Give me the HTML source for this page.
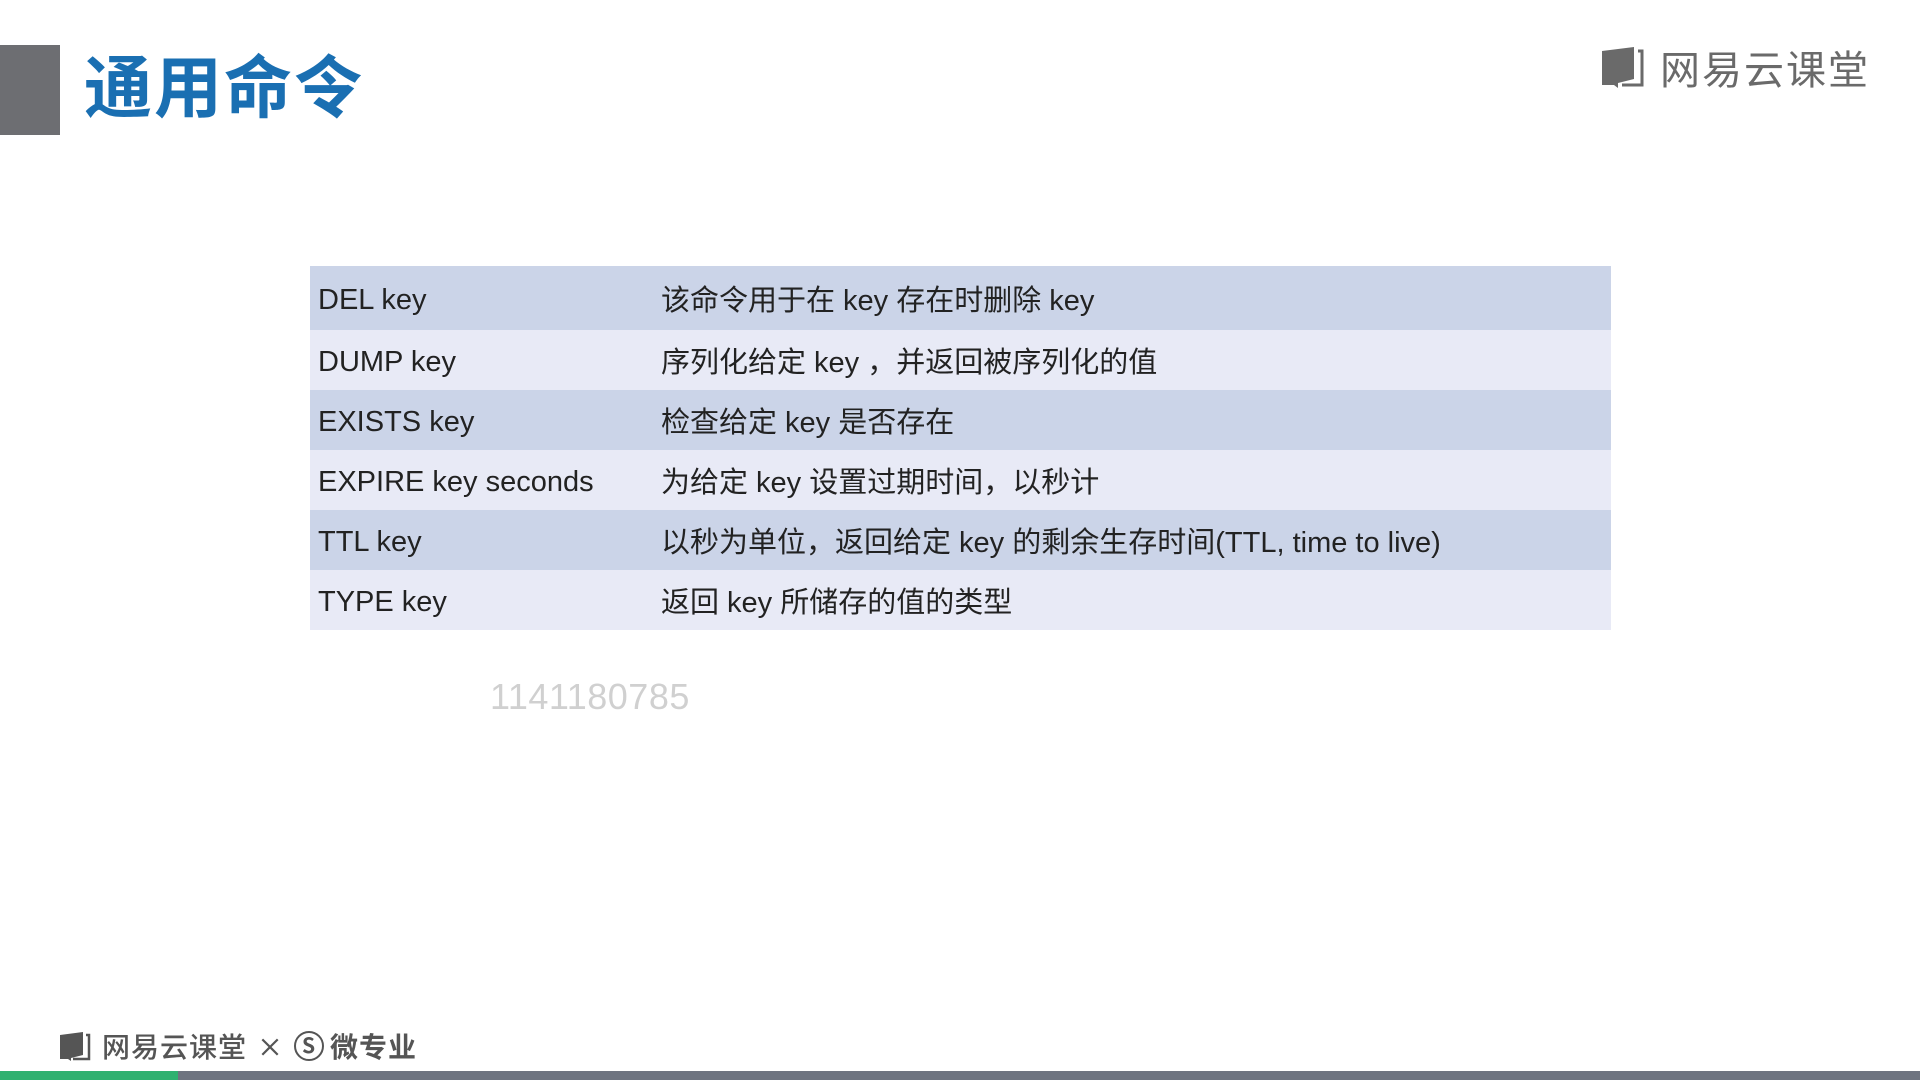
<!DOCTYPE html>
<html><head><meta charset="utf-8"><style>
*{margin:0;padding:0;box-sizing:border-box}
body{width:1920px;height:1080px;background:#fff;position:relative;overflow:hidden;font-family:"Liberation Sans","Noto Sans CJK SC",sans-serif}
.blk{position:absolute;left:0;top:45px;width:60px;height:90px;background:#6d6e72}
.title{position:absolute;left:84px;top:40px;font-size:68px;font-weight:bold;color:#1a6fb2;letter-spacing:2px;font-family:"Noto Sans CJK SC",sans-serif;line-height:85px}
.logo{position:absolute;left:1600px;top:42px;height:50px;display:flex;align-items:center;color:#6a6a6a;font-size:40px;font-family:"Noto Sans CJK SC",sans-serif;letter-spacing:2px}
table{position:absolute;left:310px;top:266px;width:1301px;border-collapse:collapse;font-size:29px;color:#222;font-family:"Liberation Sans","Noto Sans CJK SC",sans-serif}
td{height:60px;padding:0;vertical-align:middle}
td.a{padding-left:8px;width:351px;padding-top:4px}
tr.d{background:#cbd4e8}tr.l{background:#e8eaf6}
tr:first-child td{height:64px}
.wm{position:absolute;left:490px;top:676px;font-size:36px;color:#d0d0d0;letter-spacing:0.5px}
.foot{position:absolute;left:58px;top:1026px;display:flex;align-items:center;color:#555;font-size:28px;font-family:"Noto Sans CJK SC",sans-serif;letter-spacing:1px;font-weight:500}
.bar{position:absolute;left:0;top:1071px;width:1920px;height:9px;background:#6e7480}
.bar i{position:absolute;left:0;top:0;width:178px;height:9px;background:#2fb170}
</style></head><body>
<div class="blk"></div>
<div class="title">通用命令</div>
<div class="logo"><svg width="46" height="44" viewBox="0 0 46 44" style="margin-right:14px"><path d="M2 6 L34 2 L34 34 L18 38 L18 43 L14 40 L2 40 Z" fill="#6a6a6a"/><path d="M38 6 L42 6 L42 40 L22 40" stroke="#6a6a6a" stroke-width="3" fill="none"/></svg>网易云课堂</div>
<table>
<tr class="d"><td class="a">DEL key</td><td>该命令用于在 key 存在时删除 key</td></tr>
<tr class="l"><td class="a">DUMP key</td><td>序列化给定 key ，并返回被序列化的值</td></tr>
<tr class="d"><td class="a">EXISTS key</td><td>检查给定 key 是否存在</td></tr>
<tr class="l"><td class="a">EXPIRE key seconds</td><td>为给定 key 设置过期时间，以秒计</td></tr>
<tr class="d"><td class="a">TTL key</td><td>以秒为单位，返回给定 key 的剩余生存时间(TTL, time to live)</td></tr>
<tr class="l"><td class="a">TYPE key</td><td>返回 key 所储存的值的类型</td></tr>
</table>
<div class="wm">1141180785</div>
<div class="foot"><svg width="34" height="30" viewBox="0 0 32 30" style="margin-right:10px"><path d="M1 4 L24 1 L24 24 L12 27 L12 30 L9 28 L1 28 Z" fill="#555"/><path d="M27 4 L30 4 L30 28 L14 28" stroke="#555" stroke-width="2.5" fill="none"/></svg>网易云课堂<span style="margin:0 10px;font-size:26px">×</span><span style="display:inline-block;width:30px;height:30px;border:2.5px solid #555;border-radius:50%;text-align:center;line-height:25px;font-size:21px;font-weight:bold;margin-right:6px">S</span><b>微专业</b></div>
<div class="bar"><i></i></div>
</body></html>
